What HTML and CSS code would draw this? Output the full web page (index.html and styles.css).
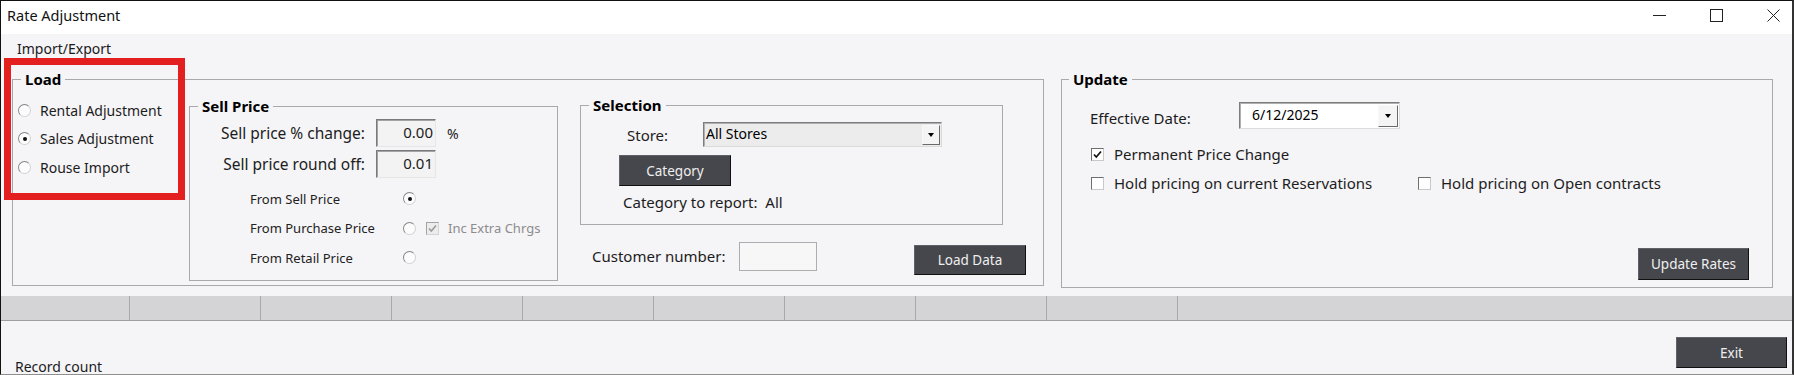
FILE: index.html
```html
<!DOCTYPE html>
<html lang="en">
<head>
<meta charset="utf-8">
<title>Rate Adjustment</title>
<link rel="stylesheet" href="styles.css">
</head>
<body>
<div class="window">
  <div class="titlebar">
    <span class="title">Rate Adjustment</span>
    <div class="controls">
      <svg class="ctl" width="13" height="13" viewBox="0 0 13 13"><path d="M0 6.5H13" stroke="#222" stroke-width="1"/></svg>
      <svg class="ctl" width="13" height="13" viewBox="0 0 13 13"><rect x="0.5" y="0.5" width="12" height="12" fill="none" stroke="#222" stroke-width="1"/></svg>
      <svg class="ctl" width="13" height="13" viewBox="0 0 13 13"><path d="M0.5 0.5L12.5 12.5M12.5 0.5L0.5 12.5" stroke="#222" stroke-width="1"/></svg>
    </div>
  </div>

  <div class="menubar"><span class="menu-item">Import/Export</span></div>

  <div class="main">
    <fieldset class="group group-load">
      <legend>Load</legend>
      <div class="load-body">
        <div class="load-opts">
          <div class="opt"><span class="radio"></span><span>Rental Adjustment</span></div>
          <div class="opt"><span class="radio checked"></span><span>Sales Adjustment</span></div>
          <div class="opt"><span class="radio"></span><span>Rouse Import</span></div>
        </div>

        <fieldset class="group group-sell">
          <legend>Sell Price</legend>
          <div class="sp-top">
            <span class="sp-label">Sell price % change:</span>
            <span class="num-box">0.00</span>
            <span class="sp-unit">%</span>
            <span class="sp-label">Sell price round off:</span>
            <span class="num-box">0.01</span>
            <span></span>
          </div>
          <div class="sp-src">
            <div class="src-row"><span class="src-label">From Sell Price</span><span class="radio checked"></span></div>
            <div class="src-row">
              <span class="src-label">From Purchase Price</span><span class="radio"></span>
              <span class="check disabled"><svg width="11" height="11" viewBox="0 0 11 11"><path d="M2 5.5L4.3 8L9 2.5" fill="none" stroke="#9a9a9a" stroke-width="1.6"/></svg></span>
              <span class="muted">Inc Extra Chrgs</span>
            </div>
            <div class="src-row"><span class="src-label">From Retail Price</span><span class="radio"></span></div>
          </div>
        </fieldset>

        <div class="sel-col">
          <fieldset class="group group-sel">
            <legend>Selection</legend>
            <div class="store-row">
              <span class="store-label">Store:</span>
              <div class="combo">
                <span class="combo-text">All Stores</span>
                <span class="combo-btn"><span class="tri"></span></span>
              </div>
            </div>
            <button class="btn btn-cat" type="button">Category</button>
            <div class="cat-report">Category to report:&nbsp; All</div>
          </fieldset>
          <div class="cust-row">
            <span class="cust-label">Customer number:</span>
            <span class="text-box"></span>
            <button class="btn btn-load" type="button">Load Data</button>
          </div>
        </div>
      </div>
    </fieldset>

    <fieldset class="group group-update">
      <legend>Update</legend>
      <div class="upd-body">
        <div class="date-row">
          <span class="date-label">Effective Date:</span>
          <div class="date-combo">
            <span class="date-text">6/12/2025</span>
            <span class="date-btn"><span class="tri"></span></span>
          </div>
        </div>
        <div class="chk-row first">
          <div class="chk-item">
            <span class="check"><svg width="11" height="11" viewBox="0 0 11 11"><path d="M2 5.5L4.3 8L9 2.5" fill="none" stroke="#111" stroke-width="1.7"/></svg></span>
            <span>Permanent Price Change</span>
          </div>
        </div>
        <div class="chk-row second">
          <div class="chk-item wide"><span class="check"></span><span>Hold pricing on current Reservations</span></div>
          <div class="chk-item"><span class="check"></span><span>Hold pricing on Open contracts</span></div>
        </div>
        <button class="btn btn-update" type="button">Update Rates</button>
      </div>
    </fieldset>
  </div>

  <div class="gridbar">
    <span class="cell first"></span>
    <span class="cell"></span>
    <span class="cell"></span>
    <span class="cell"></span>
    <span class="cell"></span>
    <span class="cell"></span>
    <span class="cell"></span>
    <span class="cell"></span>
    <span class="cell"></span>
    <span class="cell rest"></span>
  </div>

  <div class="footer">
    <span class="record">Record count</span>
    <button class="btn btn-exit" type="button">Exit</button>
  </div>

  <div class="annotation"></div>
</div>
</body>
</html>
```

FILE: styles.css
```css
* { box-sizing: border-box; }

html, body {
  margin: 0;
  padding: 0;
}

body {
  width: 1794px;
  height: 375px;
  overflow: hidden;
  font-family: "Noto Sans", "Open Sans", sans-serif;
  font-size: 14px;
  color: #1c1c1c;
  background: #f5f4f7;
}

.window {
  position: relative;
  width: 1794px;
  height: 375px;
  display: flex;
  flex-direction: column;
  overflow: hidden;
  background: #f5f4f7;
  border-top: 1px solid #111;
  border-left: 1px solid #111;
  border-right: 2px solid #333;
  border-bottom: 1px solid #8f8f8f;
}

/* title bar */
.titlebar {
  height: 33px;
  flex: none;
  background: #fff;
  display: flex;
  align-items: flex-start;
  justify-content: space-between;
}

.title {
  padding-left: 6px;
  margin-top: 4px;
  line-height: 20px;
  font-size: 14.5px;
  color: #111;
}

.controls {
  display: flex;
  gap: 44px;
  padding-top: 8px;
  padding-right: 12px;
}

.ctl { display: block; }

/* menu */
.menubar {
  height: 28px;
  flex: none;
  padding: 5px 0 0 16px;
  line-height: 20px;
  font-size: 14px;
  color: #1a1a1a;
}

/* main */
.main {
  height: 234px;
  flex: none;
  display: flex;
  align-items: flex-start;
  gap: 17px;
  padding: 9px 0 0 11px;
}

.group {
  margin: 0;
  min-width: 0;
  border: 1px solid #a9a9ac;
}

.group > legend {
  font-weight: 700;
  font-size: 15px;
  line-height: 16px;
  padding: 0 4px;
  color: #000;
}

.group-load {
  width: 1032px;
  flex: none;
  padding: 0 16px 4px 5px;
}

.group-load > legend { margin-left: 3px; }

.load-body {
  display: flex;
  align-items: flex-start;
}

.load-opts {
  width: 171px;
  flex: none;
  margin-top: 9px;
}

.opt {
  display: flex;
  align-items: center;
  gap: 9px;
  height: 28.5px;
  font-size: 14px;
}

.radio {
  position: relative;
  flex: none;
  width: 13px;
  height: 13px;
  border-radius: 50%;
  border: 1px solid;
  border-color: #858585 #d2d2d2 #d2d2d2 #858585;
  background: #fcfcfc;
}

.radio.checked::after {
  content: "";
  position: absolute;
  left: 3.5px;
  top: 3.5px;
  width: 4px;
  height: 4px;
  border-radius: 50%;
  background: #111;
}

.check {
  flex: none;
  width: 13px;
  height: 13px;
  display: flex;
  align-items: center;
  justify-content: center;
  border: 1px solid;
  border-color: #6f6f6f #c9c9c9 #c9c9c9 #6f6f6f;
  background: #fff;
}

.check svg { display: block; }

.check.disabled {
  background: #ececec;
  border-color: #a3a3a3 #d4d4d4 #d4d4d4 #a3a3a3;
}

/* sell price */
.group-sell {
  width: 369px;
  flex: none;
  margin-top: 11px;
  padding: 0 8px 7px 8px;
}

.sp-top {
  display: grid;
  grid-template-columns: 167px 60px auto;
  grid-auto-rows: 28px;
  column-gap: 11px;
  row-gap: 3px;
  align-items: center;
  margin-top: 5px;
}

.sp-label {
  text-align: right;
  font-size: 15.5px;
  white-space: nowrap;
}

.sp-unit { font-size: 14px; }

.num-box {
  height: 28px;
  line-height: 24px;
  text-align: right;
  padding-right: 2px;
  font-size: 15px;
  background: #f3f3f4;
  border: 1px solid;
  border-color: #7a7a7a #e6e6e6 #e6e6e6 #7a7a7a;
  box-shadow: inset 1px 1px 0 #a3a3a3;
}

.sp-src { margin-top: 6px; }

.src-row {
  display: flex;
  align-items: center;
  height: 29.5px;
}

.src-label {
  width: 205px;
  flex: none;
  padding-left: 52px;
  font-size: 13px;
  color: #222;
  white-space: nowrap;
}

.src-row .check { margin-left: 10px; }

.muted {
  margin-left: 9px;
  font-size: 13px;
  color: #8c8c8c;
}

/* selection */
.sel-col {
  width: 447px;
  flex: none;
  margin-left: 22px;
  margin-top: 10px;
}

.group-sel {
  width: 423px;
  padding: 0 8px 12px 8px;
}

.store-row {
  display: flex;
  align-items: center;
  height: 25px;
  margin-top: 9px;
}

.store-label {
  width: 114px;
  flex: none;
  padding-left: 38px;
  font-size: 15px;
}

.combo {
  width: 239px;
  height: 25px;
  display: flex;
  align-items: stretch;
  background: #ececed;
  border: 1px solid;
  border-color: #7c7c7c #dadada #dadada #7c7c7c;
  box-shadow: inset 1px 1px 0 #b0b0b0;
}

.combo-text {
  flex: 1;
  padding-left: 2px;
  line-height: 22px;
  font-size: 14px;
  color: #000;
}

.combo-btn, .date-btn {
  width: 18px;
  flex: none;
  display: flex;
  align-items: center;
  justify-content: center;
  margin: 2px 1px 1px 0;
  background: #f4f4f4;
  border: 1px solid;
  border-color: #f8f8f8 #6a6a6a #6a6a6a #f8f8f8;
}

.tri {
  width: 0;
  height: 0;
  border-left: 3.5px solid transparent;
  border-right: 3.5px solid transparent;
  border-top: 4px solid #000;
}

.btn {
  display: block;
  padding: 0;
  font-family: "Noto Sans", "Open Sans", sans-serif;
  font-size: 13.5px;
  color: #efefef;
  background: #46474d;
  border: 1px solid;
  border-color: #606168 #101010 #101010 #606168;
  cursor: default;
}

.btn-cat {
  width: 112px;
  height: 31px;
  margin: 8px 0 0 30px;
}

.cat-report {
  margin: 6px 0 0 34px;
  line-height: 20px;
  font-size: 15px;
}

.cust-row {
  display: flex;
  align-items: flex-start;
  margin-top: 17px;
  padding-left: 12px;
}

.cust-label {
  width: 147px;
  flex: none;
  line-height: 29px;
  font-size: 15px;
}

.text-box {
  width: 78px;
  height: 29px;
  flex: none;
  background: #f7f7f8;
  border: 1px solid #adadad;
}

.btn-load {
  width: 112px;
  height: 30px;
  margin: 3px 0 0 97px;
}

/* update */
.group-update {
  width: 712px;
  flex: none;
  padding: 0 0 7px 7px;
}

.upd-body {
  height: 193px;
  display: flex;
  flex-direction: column;
}

.date-row {
  display: flex;
  align-items: center;
  height: 27px;
  margin-top: 15px;
}

.date-label {
  width: 170px;
  flex: none;
  padding: 5px 0 0 21px;
  font-size: 15px;
}

.date-combo {
  width: 161px;
  height: 27px;
  display: flex;
  align-items: stretch;
  background: #fff;
  border: 1px solid;
  border-color: #7c7c7c #dcdcdc #dcdcdc #7c7c7c;
  box-shadow: inset 1px 1px 0 #b0b0b0;
}

.date-text {
  flex: 1;
  padding-left: 12px;
  line-height: 24px;
  font-size: 14px;
  color: #000;
}

.date-btn { width: 20px; }

.chk-row {
  display: flex;
  align-items: center;
  height: 22px;
  padding-left: 22px;
  font-size: 15px;
}

.chk-row.first { margin-top: 14px; }
.chk-row.second { margin-top: 7px; }

.chk-item {
  display: flex;
  align-items: center;
  gap: 10px;
  white-space: nowrap;
}

.chk-item.wide { width: 327px; flex: none; }

.btn-update {
  width: 111px;
  height: 32px;
  margin-top: auto;
  margin-right: 23px;
  align-self: flex-end;
}

/* grid header strip */
.gridbar {
  height: 25px;
  flex: none;
  display: flex;
  background: #d4d3d6;
  border-bottom: 1px solid #9e9e9e;
}

.cell {
  width: 131px;
  flex: none;
  border-right: 1px solid #a9a9ab;
}

.cell.first { width: 129px; }
.cell.rest { flex: 1; border-right: 0; }

/* footer */
.footer {
  flex: 1;
  display: flex;
  justify-content: space-between;
  align-items: flex-start;
  padding: 0 5px 0 14px;
}

.record {
  align-self: flex-end;
  margin-bottom: -3px;
  line-height: 20px;
  font-size: 14px;
}

.btn-exit {
  width: 111px;
  height: 31px;
  margin-top: 16px;
}

/* red highlight annotation over the Load options */
.annotation {
  position: absolute;
  left: 3px;
  top: 57px;
  width: 181px;
  height: 142px;
  border: 7px solid #e3201f;
  pointer-events: none;
}
```
